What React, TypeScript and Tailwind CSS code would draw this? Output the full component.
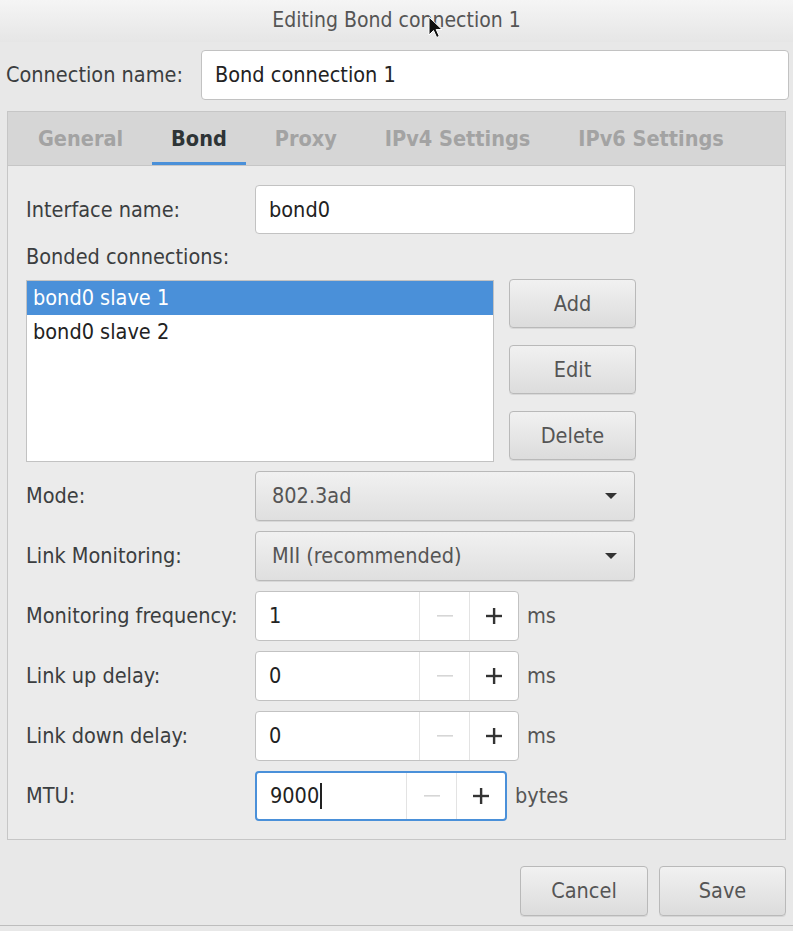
import * as React from "react"

const font = { fontFamily: '"DejaVu Sans Condensed", "DejaVu Sans", sans-serif' }

function Label({ children }: { children: React.ReactNode }) {
  return <div className="w-[229px] shrink-0 text-[#3b3e40]">{children}</div>
}

function Combo({ value }: { value: string }) {
  return (
    <div className="flex h-[50px] w-[380px] items-center justify-between rounded-[4px] border border-[#b9b9b9] bg-gradient-to-b from-[#f1f1f1] to-[#dfdfdf] pl-[16px] pr-[16px] text-[#555] shadow-[0_1px_0_rgba(0,0,0,0.08)]">
      <span>{value}</span>
      <svg width="14" height="8" viewBox="0 0 14 8">
        <path d="M1 1h12L7 7z" fill="#333" />
      </svg>
    </div>
  )
}

function Spin({ value, unit, focused = false, caret = false }: { value: string; unit: string; focused?: boolean; caret?: boolean }) {
  return (
    <div className="flex items-center">
      <div
        className={
          focused
            ? "flex h-[50px] w-[252px] rounded-[4px] border-2 border-[#4a90d9] bg-white"
            : "flex h-[50px] w-[264px] rounded-[4px] border border-[#c2c2c2] bg-white"
        }
      >
        <div className="flex flex-1 items-center pl-[13px] text-[#222]">
          {value}
          {caret && <span className="ml-[1px] inline-block h-[26px] w-[1.5px] bg-[#222]" />}
        </div>
        <div className="flex w-[50px] items-center justify-center border-l border-[#e3e3e3]">
          <svg width="16" height="2" viewBox="0 0 16 2">
            <rect width="16" height="1.6" fill="#d6d6d6" />
          </svg>
        </div>
        <div className="flex w-[49px] items-center justify-center border-l border-[#e3e3e3]">
          <svg width="16" height="16" viewBox="0 0 16 16">
            <rect x="6.9" y="0" width="2.4" height="16" fill="#333" />
            <rect x="0" y="6.8" width="16" height="2.4" fill="#333" />
          </svg>
        </div>
      </div>
      <span className="ml-[8px] text-[#555]">{unit}</span>
    </div>
  )
}

function Button({ children, className = "" }: { children: React.ReactNode; className?: string }) {
  return (
    <div
      className={
        "flex items-center justify-center rounded-[4px] border border-[#b9b9b9] bg-gradient-to-b from-[#f1f1f1] to-[#dcdcdc] text-[#555] shadow-[0_1px_0_rgba(0,0,0,0.08)] " +
        className
      }
    >
      {children}
    </div>
  )
}

export default function App() {
  const tabs = ["General", "Bond", "Proxy", "IPv4 Settings", "IPv6 Settings"]
  return (
    <div style={font} className="relative flex h-[931px] w-[793px] flex-col bg-[#e8e8e8] text-[21.5px] leading-[1.2]">
      {/* title bar */}
      <div className="flex h-[42px] items-center justify-center bg-gradient-to-b from-[#f5f5f5] to-[#e6e6e6] text-[21px] text-[#555]">
        Editing Bond connection 1
      </div>
      <svg className="absolute left-[428px] top-[16px]" width="14" height="24" viewBox="0 0 14 24">
        <path d="M1 1v18l4.5-4.5 3.2 7 2.6-1.2-3.1-6.8H14z" fill="#111" stroke="#fff" strokeWidth="1" />
      </svg>

      {/* connection name */}
      <div className="mt-[8px] flex items-center pl-[6px] pr-[4px]">
        <div className="w-[195px] text-[#3b3e40]">Connection name:</div>
        <div className="flex h-[50px] flex-1 items-center rounded-[4px] border border-[#c2c2c2] bg-white pl-[13px] text-[#222]">
          Bond connection 1
        </div>
      </div>

      {/* notebook */}
      <div className="mx-[7px] mt-[11px] border border-[#c6c6c6] bg-[#ebebeb]">
        <div className="flex h-[54px] items-stretch border-b border-[#c6c6c6] bg-[#d6d6d6] pl-[6px] font-bold">
          {tabs.map((t) => (
            <div
              key={t}
              className={
                t === "Bond"
                  ? "mx-[5px] flex items-center border-b-[3px] border-[#4a90d9] px-[19px] pt-[3px] text-[#2e3436]"
                  : "mx-[5px] flex items-center border-b-[3px] border-transparent px-[19px] pt-[3px] text-[#a3a3a3]"
              }
            >
              {t}
            </div>
          ))}
        </div>

        <div className="flex flex-col px-[18px] pb-[18px] pt-[19px]">
          <div className="flex items-center">
            <Label>Interface name:</Label>
            <div className="flex h-[49px] w-[380px] items-center rounded-[4px] border border-[#c2c2c2] bg-white pl-[13px] text-[#222]">
              bond0
            </div>
          </div>

          <div className="mt-[8px] flex h-[38px] items-center pb-[9px] text-[#3b3e40]">Bonded connections:</div>

          <div className="flex">
            <div className="h-[182px] w-[468px] border border-[#c2c2c2] bg-white">
              <div className="flex h-[34px] items-center bg-[#4a90d9] pl-[6px] text-white">bond0 slave 1</div>
              <div className="flex h-[34px] items-center pl-[6px] text-[#222]">bond0 slave 2</div>
            </div>
            <div className="-mt-[1px] ml-[15px] flex flex-col gap-[17px]">
              <Button className="h-[49px] w-[127px]">Add</Button>
              <Button className="h-[49px] w-[127px]">Edit</Button>
              <Button className="h-[49px] w-[127px]">Delete</Button>
            </div>
          </div>

          <div className="mt-[9px] flex flex-col gap-[10px]">
            <div className="flex items-center">
              <Label>Mode:</Label>
              <Combo value="802.3ad" />
            </div>
            <div className="flex items-center">
              <Label>Link Monitoring:</Label>
              <Combo value="MII (recommended)" />
            </div>
            <div className="flex items-center">
              <Label>Monitoring frequency:</Label>
              <Spin value="1" unit="ms" />
            </div>
            <div className="flex items-center">
              <Label>Link up delay:</Label>
              <Spin value="0" unit="ms" />
            </div>
            <div className="flex items-center">
              <Label>Link down delay:</Label>
              <Spin value="0" unit="ms" />
            </div>
            <div className="flex items-center">
              <Label>MTU:</Label>
              <Spin value="9000" unit="bytes" focused caret />
            </div>
          </div>
        </div>
      </div>

      {/* action buttons */}
      <div className="mt-[26px] flex justify-end gap-[11px] pr-[7px]">
        <Button className="h-[50px] w-[128px]">Cancel</Button>
        <Button className="h-[50px] w-[127px]">Save</Button>
      </div>
      <div className="mt-auto h-[6px] border-t border-[#bdbdbd] bg-[#e8e8e8]" />
    </div>
  )
}
